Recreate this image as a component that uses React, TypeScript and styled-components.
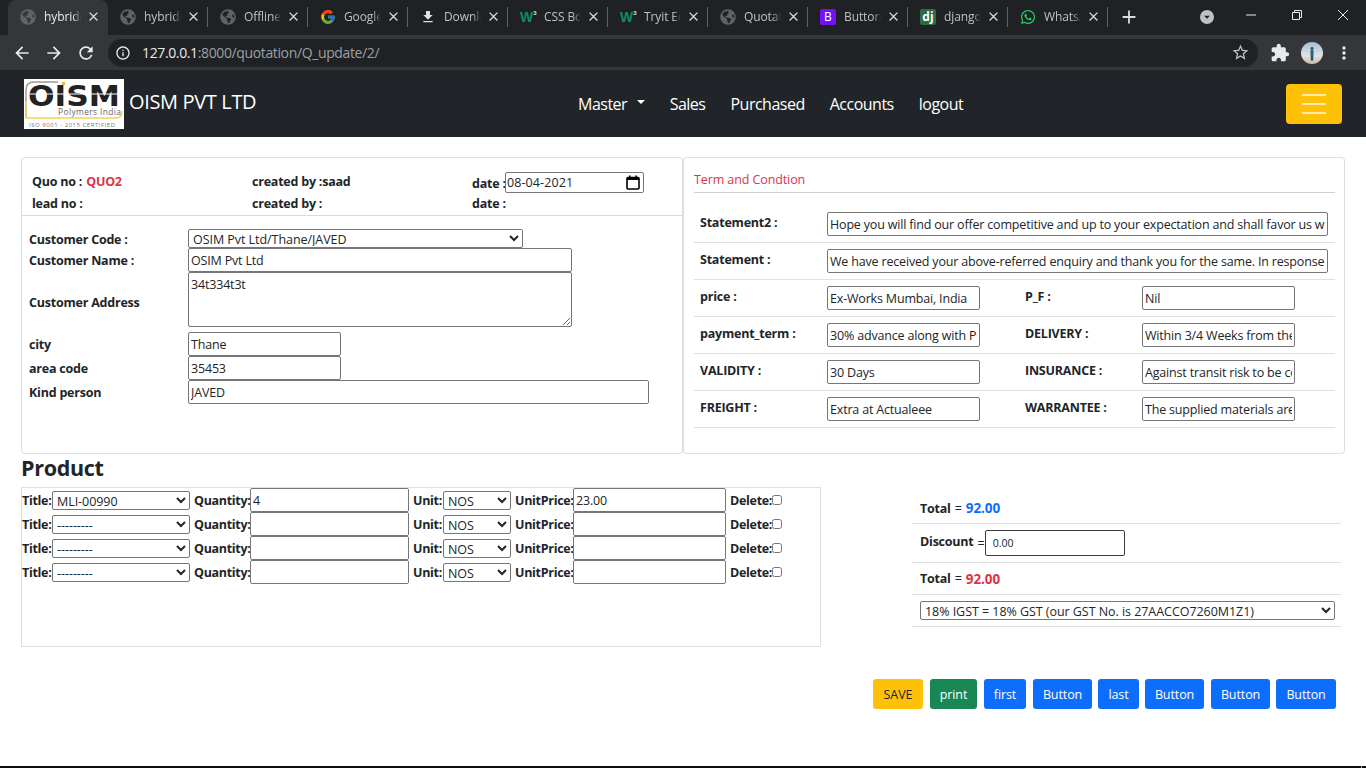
import React from "react";
import styled, { createGlobalStyle } from "styled-components";
import {
  MdArrowBack,
  MdArrowForward,
  MdRefresh,
  MdInfoOutline,
  MdStarBorder,
  MdExtension,
  MdMoreVert,
  MdFileDownload,
  MdClose,
  MdAdd,
  MdArrowDropDown,
} from "react-icons/md";
import { FaGlobeAmericas, FaWhatsapp } from "react-icons/fa";
import { FcGoogle } from "react-icons/fc";

const FONT = `"Open Sans", "Noto Sans", "Liberation Sans", sans-serif`;

const Global = createGlobalStyle`
  html, body { margin: 0; padding: 0; background: #fff; overflow: hidden; }
  body { font-family: ${FONT}; font-size: 13px; color: #212529; }
  * { box-sizing: border-box; }
`;

const Page = styled.div`
  width: 1366px;
  height: 768px;
  display: flex;
  flex-direction: column;
  overflow: hidden;
`;

/* ---------- browser chrome ---------- */
const TabStrip = styled.div`
  height: 35px;
  background: #202124;
  display: flex;
  align-items: stretch;
  padding-left: 8px;
  flex: none;
`;
const Tab = styled.div<{ $active?: boolean; $sep?: boolean }>`
  width: 100px;
  height: 35px;
  flex: none;
  position: relative;
  display: flex;
  align-items: center;
  padding: 0 0 2px 12px;
  gap: 8px;
  background: ${(p) => (p.$active ? "#35363a" : "transparent")};
  border-radius: ${(p) => (p.$active ? "8px 8px 0 0" : "0")};
  color: ${(p) => (p.$active ? "#e8eaed" : "#bdc1c6")};
  &::after {
    content: "";
    display: ${(p) => (p.$sep ? "block" : "none")};
    position: absolute;
    right: 0;
    top: 7px;
    height: 20px;
    width: 1px;
    background: #5f6368;
  }
`;
const Fav = styled.span<{ $color?: string }>`
  width: 16px;
  height: 16px;
  flex: none;
  display: flex;
  align-items: center;
  justify-content: center;
  color: ${(p) => p.$color || "#5f6368"};
  font-size: 16px;
`;
const BadgeFav = styled.span<{ $bg: string; $weight: number }>`
  width: 16px;
  height: 16px;
  flex: none;
  display: flex;
  align-items: center;
  justify-content: center;
  background: ${(p) => p.$bg};
  border-radius: 2px;
  color: #fff;
  font: ${(p) => p.$weight} 12px ${FONT};
`;
const W3 = styled.span`
  width: 16px;
  flex: none;
  color: #0b8f5f;
  font: 800 14px "Liberation Sans", sans-serif;
  letter-spacing: -1px;
  display: flex;
  align-items: flex-start;
  sup { font-size: 6px; line-height: 8px; margin-left: 1px; color: #cfe9de; }
`;
const TabTitle = styled.span`
  width: 37px;
  overflow: hidden;
  white-space: nowrap;
  font-size: 12px;
  letter-spacing: -0.1px;
  -webkit-mask-image: linear-gradient(90deg, #000 78%, transparent 100%);
  mask-image: linear-gradient(90deg, #000 78%, transparent 100%);
`;
const TabClose = styled.span`
  position: absolute;
  left: 78px;
  top: 9px;
  width: 15px;
  height: 15px;
  display: flex;
  align-items: center;
  justify-content: center;
  font-size: 15px;
  color: #dadce0;
`;
const NewTab = styled.span`
  margin-left: 10px;
  width: 24px;
  padding-bottom: 2px;
  display: flex;
  align-items: center;
  justify-content: center;
  color: #dadce0;
  font-size: 22px;
`;
const TabSearch = styled.span`
  margin-left: 60px;
  margin-bottom: 1px;
  align-self: center;
  width: 14px;
  height: 14px;
  border-radius: 50%;
  background: #bdc1c6;
  color: #202124;
  display: flex;
  align-items: center;
  justify-content: center;
  font-size: 16px;
`;
const WinControls = styled.div`
  margin-left: 14px;
  display: flex;
  color: #e8eaed;
  align-items: flex-start;
`;
const WinBtn = styled.span`
  width: 46px;
  height: 30px;
  display: flex;
  align-items: center;
  justify-content: center;
`;

const Toolbar = styled.div`
  height: 35px;
  background: #35363a;
  display: flex;
  align-items: center;
  padding-left: 12px;
  color: #e8eaed;
  flex: none;
`;
const ToolIcon = styled.span<{ $w?: number }>`
  width: ${(p) => p.$w || 32}px;
  display: flex;
  align-items: center;
  justify-content: center;
  font-size: 20px;
  flex: none;
`;
const NavGroup = styled.div`
  display: flex;
  width: 96px;
  flex: none;
`;
const Omnibox = styled.div`
  width: 1150px;
  height: 28px;
  margin-right: 6px;
  background: #202124;
  border-radius: 14px;
  display: flex;
  align-items: center;
  padding-left: 7px;
  font-size: 14px;
  color: #9aa0a6;
  flex: none;
`;
const InfoIcon = styled.span`
  width: 16px;
  display: flex;
  font-size: 16px;
  color: #e8eaed;
  margin-right: 11px;
`;
const Host = styled.span`
  color: #e8eaed;
`;
const UrlText = styled.span`
  flex: 1;
  letter-spacing: -0.37px;
`;
const Star = styled.span`
  font-size: 19px;
  color: #bdc1c6;
  display: flex;
  margin-right: 8px;
`;
const Avatar = styled.span`
  width: 22px;
  height: 22px;
  border-radius: 50%;
  flex: none;
  overflow: hidden;
  background: linear-gradient(180deg, #a9bccb 0%, #dfe3e6 62%, #cbbca6 100%);
  display: flex;
  align-items: center;
  justify-content: center;
  svg { display: block; }
`;

/* ---------- navbar ---------- */
const Navbar = styled.nav`
  height: 67px;
  background: #212529;
  display: flex;
  align-items: center;
  padding: 0 24px;
  flex: none;
`;
const LogoBox = styled.span`
  width: 100px;
  height: 50px;
  background: #fff;
  flex: none;
  display: block;
  svg { display: block; }
`;
const Brand = styled.span`
  margin-left: 5px;
  color: #fff;
  font-size: 20px;
  line-height: 27px;
  position: relative;
  top: -2px;
  letter-spacing: -0.35px;
  width: 128px;
  white-space: nowrap;
`;
const NavLinks = styled.div`
  display: flex;
  margin-left: 321px;
  gap: 25px;
  color: #fff;
  font-size: 16px;
  letter-spacing: -0.5px;
`;
const NavLink = styled.span`
  display: flex;
  align-items: center;
  white-space: nowrap;
`;
const Caret = styled.span`
  display: inline-block;
  margin-left: 9.5px;
  border-top: 4.8px solid #fff;
  border-left: 4.8px solid transparent;
  border-right: 4.8px solid transparent;
  position: relative;
  top: -2px;
`;
const Toggler = styled.span`
  margin-left: auto;
  width: 56px;
  height: 40px;
  background: #ffc107;
  border-radius: 4px;
  display: flex;
  flex-direction: column;
  align-items: center;
  justify-content: center;
  gap: 7px;
`;
const TogglerBar = styled.span`
  width: 24px;
  height: 2px;
  background: #ffeaa6;
`;

/* ---------- main ---------- */
const Main = styled.main`
  flex: 1;
  padding: 20px 21px 0;
  display: flex;
  flex-direction: column;
  min-height: 0;
`;
const Cards = styled.div`
  display: grid;
  grid-template-columns: 662px 662px;
  height: 297px;
  flex: none;
`;
const Card = styled.section`
  border: 1px solid rgba(0, 0, 0, 0.125);
  border-radius: 4px;
  background: #fff;
  min-width: 0;
`;
const CardHead = styled.div`
  height: 58px;
  padding: 14px 0 0 10px;
  border-bottom: 1px solid rgba(0, 0, 0, 0.15);
`;
const HeadRow = styled.div`
  display: grid;
  grid-template-columns: 220px 220px 1fr;
  height: 21px;
  align-items: center;
`;
const Bold = styled.span`
  font-weight: 700;
  font-size: 12.5px;
  letter-spacing: -0.22px;
  white-space: nowrap;
`;
const RaisedBold = styled(Bold)`
  margin-bottom: 3px;
`;
const LoweredBold = styled(Bold)`
  padding-top: 2px;
`;
const Red = styled.span`
  color: #dc3545;
  margin-left: 1px;
`;
const DateWrap = styled.span`
  display: inline-flex;
  align-items: center;
`;
const DateLabel = styled(Bold)`
  width: 33px;
  padding-top: 2px;
`;
const DateBox = styled.span`
  width: 139px;
  height: 21px;
  border: 1px solid #767676;
  border-radius: 2px;
  display: flex;
  align-items: center;
  justify-content: space-between;
  padding: 0 3px 0 1px;
`;
const DateInput = styled.input`
  border: 0;
  outline: 0;
  width: 100px;
  padding: 0;
  font: 12.5px ${FONT};
  color: #212529;
  letter-spacing: 0.1px;
`;
const CustomerForm = styled.div`
  padding: 13px 0 0 7px;
  display: flex;
  flex-direction: column;
`;
const FormRow = styled.div<{ $h: number }>`
  display: grid;
  grid-template-columns: 159px 1fr;
  height: ${(p) => p.$h}px;
  align-items: center;
`;
const BaseInput = styled.input<{ $w?: number }>`
  display: block;
  width: ${(p) => (p.$w ? `${p.$w}px` : "100%")};
  height: 24px;
  border: 1px solid #767676;
  border-radius: 2px;
  background: #fff;
  padding: 1px 2px;
  font: 12.5px ${FONT};
  letter-spacing: -0.18px;
  color: #212529;
  outline: 0;
`;
const BaseSelect = styled.select<{ $w: number; $h?: number }>`
  display: block;
  flex: none;
  width: ${(p) => p.$w}px;
  height: ${(p) => p.$h || 19}px;
  border: 1px solid #767676;
  border-radius: 2px;
  background: #fff;
  font: 12.5px ${FONT};
  letter-spacing: -0.05px;
  color: #212529;
  outline: 0;
  padding: 0 0 1px;
`;
const BaseArea = styled.textarea`
  display: block;
  align-self: start;
  width: 384px;
  height: 55px;
  border: 1px solid #767676;
  border-radius: 2px;
  padding: 3px 2px;
  font: 12.5px ${FONT};
  letter-spacing: -0.18px;
  color: #212529;
  outline: 0;
`;

const TermBody = styled.div`
  padding: 0 9px 0 10px;
`;
const TermTitle = styled.div`
  height: 35px;
  border-bottom: 1px solid rgba(0, 0, 0, 0.18);
  color: #dc3545;
  font-size: 12.5px;
  letter-spacing: -0.1px;
  padding-top: 13px;
  margin-bottom: 13px;
`;
const TermRow = styled.div<{ $wide?: boolean }>`
  height: 37px;
  border-bottom: 1px solid rgba(0, 0, 0, 0.125);
  display: grid;
  grid-template-columns: ${(p) => (p.$wide ? "133px 501px" : "133px 153px 45px 117px 153px")};
  grid-template-rows: 24px;
  padding-top: 6px;
`;
const TermLabel = styled(Bold)<{ $indent?: boolean }>`
  padding-left: ${(p) => (p.$indent ? "6px" : "0")};
  line-height: 21px;
`;
const Spacer = styled.span``;

/* ---------- product ---------- */
const Heading = styled.h3`
  margin: 0;
  height: 33px;
  font-size: 21.5px;
  line-height: 28px;
  font-weight: 700;
  letter-spacing: -0.3px;
`;
const LowerGrid = styled.div`
  display: grid;
  grid-template-columns: 800px 429px;
  column-gap: 91px;
  flex: none;
`;
const ProductBox = styled.div`
  height: 160px;
  border: 1px solid rgba(0, 0, 0, 0.125);
`;
const ProductRow = styled.div`
  height: 24px;
  display: flex;
  align-items: center;
  white-space: nowrap;
`;
const ProdLabel = styled.span<{ $w: number; $ml?: number }>`
  font-weight: 700;
  font-size: 12.5px;
  letter-spacing: -0.3px;
  margin-left: ${(p) => p.$ml ?? 4}px;
  width: ${(p) => p.$w}px;
  flex: none;
`;
const Check = styled.input`
  margin: 0;
  width: 10px;
  height: 10px;
  flex: none;
`;
const Totals = styled.div`
  margin-top: 6px;
`;
const TotalRow = styled.div<{ $h: number }>`
  height: ${(p) => p.$h}px;
  border-bottom: 1px solid rgba(0, 0, 0, 0.125);
  display: flex;
  align-items: center;
  padding-left: 8px;
`;
const Eq = styled.span`
  margin: 0 4px;
  font-size: 12.5px;
`;
const Amount = styled(Bold)<{ $color: string }>`
  color: ${(p) => p.$color};
  font-size: 13.5px;
  letter-spacing: -0.1px;
`;
const DiscountInput = styled.input`
  width: 140px;
  height: 26px;
  border: 1px solid #3b3b3b;
  border-radius: 2px;
  padding: 0 7px;
  font: 10.5px ${FONT};
  color: #212529;
  outline: 0;
  margin-left: -4px;
`;
const Actions = styled.div`
  display: flex;
  justify-content: flex-end;
  padding-right: 9px;
  margin-top: 32px;
  flex: none;
`;
const Btn = styled.button<{ $bg: string; $fg?: string; $w: number; $gap?: number }>`
  width: ${(p) => p.$w}px;
  height: 30px;
  margin-left: ${(p) => p.$gap ?? 7}px;
  padding: 0;
  border: 0;
  border-radius: 3px;
  background: ${(p) => p.$bg};
  color: ${(p) => p.$fg || "#fff"};
  font: 12.5px ${FONT};
  letter-spacing: -0.1px;
`;
const BottomEdge = styled.div`
  height: 2px;
  background: #0d0d0d;
  flex: none;
  position: relative;
  &::after {
    content: "";
    position: absolute;
    left: 1361px;
    top: 0;
    width: 1px;
    height: 2px;
    background: #b5b5b5;
  }
`;

const Globe = () => (
  <Fav>
    <FaGlobeAmericas />
  </Fav>
);

const tabs: { icon: React.ReactNode; title: string }[] = [
  { icon: <Globe />, title: "hybrid(1)" },
  { icon: <Globe />, title: "hybrid(1)" },
  { icon: <Globe />, title: "Offline Page" },
  { icon: <Fav><FcGoogle /></Fav>, title: "Google" },
  { icon: <Fav $color="#dee1e6"><MdFileDownload /></Fav>, title: "Downloads" },
  { icon: <W3>W<sup>3</sup></W3>, title: "CSS Borders" },
  { icon: <W3>W<sup>3</sup></W3>, title: "Tryit Editor" },
  { icon: <Globe />, title: "Quotation" },
  { icon: <BadgeFav $bg="#7410f5" $weight={400}>B</BadgeFav>, title: "Buttons" },
  { icon: <BadgeFav $bg="#2c6b45" $weight={700}>dj</BadgeFav>, title: "django" },
  { icon: <Fav $color="#25d366"><FaWhatsapp /></Fav>, title: "WhatsApp" },
];

const Logo = () => (
  <svg width="100" height="50" viewBox="0 0 100 50">
    <rect width="100" height="50" fill="#fff" />
    <path d="M2 38 V11 Q2 3 10 3 H34" fill="none" stroke="#9a9a9a" strokeWidth="1.5" />
    <path d="M2 22 V39 H92 Q98 39 98 32" fill="none" stroke="#f0d25a" strokeWidth="1.6" />
    <text
      x="4"
      y="27"
      fontFamily="DejaVu Sans, sans-serif"
      fontWeight="700"
      fontSize="29"
      textLength="92"
      lengthAdjust="spacingAndGlyphs"
      fill="#222"
    >
      OISM
    </text>
    <path d="M6 15 H96" stroke="#fff" strokeWidth="1" />
    <rect x="38" y="3" width="3" height="3" fill="#e9b92e" />
    <text x="34" y="36" fontFamily="Open Sans, sans-serif" fontSize="8.4" fill="#666" textLength="63">
      Polymers India
    </text>
    <text x="5" y="47.5" fontFamily="Open Sans, sans-serif" fontSize="6" fill="#777" textLength="86">
      ISO 9001 - 2015 CERTIFIED
    </text>
  </svg>
);

const Calendar = () => (
  <svg width="14" height="15" viewBox="0 0 14 15">
    <rect x="1" y="2.5" width="12" height="11.5" rx="1" fill="none" stroke="#000" strokeWidth="1.6" />
    <rect x="1" y="2" width="12" height="3" fill="#000" />
    <rect x="3" y="0.5" width="1.6" height="2" fill="#000" />
    <rect x="9.4" y="0.5" width="1.6" height="2" fill="#000" />
  </svg>
);

const Person = () => (
  <svg width="22" height="22" viewBox="0 0 22 22">
    <circle cx="11" cy="6.5" r="1.4" fill="#33424f" />
    <rect x="9.4" y="8" width="3.2" height="6" rx="1" fill="#1f6f90" />
    <rect x="9.7" y="13.5" width="2.6" height="5" fill="#3a4c5c" />
  </svg>
);

const MinimizeGlyph = () => (
  <svg width="10" height="10" viewBox="0 0 10 10">
    <path d="M0 5 H10" stroke="#e8eaed" strokeWidth="1" />
  </svg>
);
const RestoreGlyph = () => (
  <svg width="10" height="10" viewBox="0 0 10 10">
    <path d="M.5 2.5 H7.5 V9.5 H.5 Z M2.5 2.5 V.5 H9.5 V7.5 H7.5" fill="none" stroke="#e8eaed" strokeWidth="1" />
  </svg>
);
const CloseGlyph = () => (
  <svg width="10" height="10" viewBox="0 0 10 10">
    <path d="M0 0 L10 10 M10 0 L0 10" stroke="#e8eaed" strokeWidth="1" />
  </svg>
);

const noop = () => {};

const Field = (p: { value: string; w?: number }) => (
  <BaseInput value={p.value} onChange={noop} $w={p.w} />
);

const termPairs = [
  ["price :", "Ex-Works Mumbai, India", "P_F :", "Nil"],
  ["payment_term :", "30% advance along with PO, balance", "DELIVERY :", "Within 3/4 Weeks from the date"],
  ["VALIDITY :", "30 Days", "INSURANCE :", "Against transit risk to be covered"],
  ["FREIGHT :", "Extra at Actualeee", "WARRANTEE :", "The supplied materials are warranted"],
];

const products = [
  { title: "MLI-00990", qty: "4", price: "23.00" },
  { title: "---------", qty: "", price: "" },
  { title: "---------", qty: "", price: "" },
  { title: "---------", qty: "", price: "" },
];

export default function App() {
  return (
    <Page>
      <Global />
      <TabStrip>
        {tabs.map((t, i) => (
          <Tab key={i} $active={i === 0} $sep={i > 0}>
            {t.icon}
            <TabTitle>{t.title}</TabTitle>
            <TabClose>
              <MdClose />
            </TabClose>
          </Tab>
        ))}
        <NewTab>
          <MdAdd />
        </NewTab>
        <TabSearch>
          <MdArrowDropDown />
        </TabSearch>
        <WinControls>
          <WinBtn>
            <MinimizeGlyph />
          </WinBtn>
          <WinBtn>
            <RestoreGlyph />
          </WinBtn>
          <WinBtn>
            <CloseGlyph />
          </WinBtn>
        </WinControls>
      </TabStrip>
      <Toolbar>
        <NavGroup>
          <ToolIcon $w={20}><MdArrowBack /></ToolIcon>
          <ToolIcon $w={44}><MdArrowForward /></ToolIcon>
          <ToolIcon $w={20}><MdRefresh /></ToolIcon>
        </NavGroup>
        <Omnibox>
          <InfoIcon>
            <MdInfoOutline />
          </InfoIcon>
          <UrlText>
            <Host>127.0.0.1</Host>:8000/quotation/Q_update/2/
          </UrlText>
          <Star>
            <MdStarBorder />
          </Star>
        </Omnibox>
        <ToolIcon><MdExtension /></ToolIcon>
        <ToolIcon>
          <Avatar>
            <Person />
          </Avatar>
        </ToolIcon>
        <ToolIcon><MdMoreVert /></ToolIcon>
      </Toolbar>
      <Navbar>
        <LogoBox>
          <Logo />
        </LogoBox>
        <Brand>OISM PVT LTD</Brand>
        <NavLinks>
          <NavLink>
            Master
            <Caret />
          </NavLink>
          <NavLink>Sales</NavLink>
          <NavLink>Purchased</NavLink>
          <NavLink>Accounts</NavLink>
          <NavLink>logout</NavLink>
        </NavLinks>
        <Toggler>
          <TogglerBar />
          <TogglerBar />
          <TogglerBar />
        </Toggler>
      </Navbar>
      <Main>
        <Cards>
          <Card>
            <CardHead>
              <HeadRow>
                <RaisedBold>
                  Quo no : <Red>QUO2</Red>
                </RaisedBold>
                <RaisedBold>created by :saad</RaisedBold>
                <DateWrap>
                  <DateLabel>date :</DateLabel>
                  <DateBox>
                    <DateInput value="08-04-2021" onChange={noop} />
                    <Calendar />
                  </DateBox>
                </DateWrap>
              </HeadRow>
              <HeadRow>
                <Bold>lead no :</Bold>
                <Bold>created by :</Bold>
                <Bold>date :</Bold>
              </HeadRow>
            </CardHead>
            <CustomerForm>
              <FormRow $h={19}>
                <LoweredBold>Customer Code :</LoweredBold>
                <BaseSelect $w={335} value="a" onChange={noop}>
                  <option value="a">OSIM Pvt Ltd/Thane/JAVED</option>
                </BaseSelect>
              </FormRow>
              <FormRow $h={24}>
                <Bold>Customer Name :</Bold>
                <Field value="OSIM Pvt Ltd" w={384} />
              </FormRow>
              <FormRow $h={60}>
                <Bold>Customer Address</Bold>
                <BaseArea value="34t334t3t" onChange={noop} />
              </FormRow>
              <FormRow $h={24}>
                <Bold>city</Bold>
                <Field value="Thane" w={153} />
              </FormRow>
              <FormRow $h={24}>
                <Bold>area code</Bold>
                <Field value="35453" w={153} />
              </FormRow>
              <FormRow $h={24}>
                <Bold>Kind person</Bold>
                <Field value="JAVED" w={461} />
              </FormRow>
            </CustomerForm>
          </Card>
          <Card>
            <TermBody>
              <TermTitle>Term and Condtion</TermTitle>
              <TermRow $wide>
                <TermLabel $indent>Statement2 :</TermLabel>
                <Field value="Hope you will find our offer competitive and up to your expectation and shall favor us with your valued order" />
              </TermRow>
              <TermRow $wide>
                <TermLabel $indent>Statement :</TermLabel>
                <Field value="We have received your above-referred enquiry and thank you for the same. In response to your enquiry" />
              </TermRow>
              {termPairs.map((r) => (
                <TermRow key={r[0]}>
                  <TermLabel $indent>{r[0]}</TermLabel>
                  <Field value={r[1]} />
                  <Spacer />
                  <TermLabel>{r[2]}</TermLabel>
                  <Field value={r[3]} />
                </TermRow>
              ))}
            </TermBody>
          </Card>
        </Cards>
        <Heading>Product</Heading>
        <LowerGrid>
          <ProductBox>
            {products.map((p, i) => (
              <ProductRow key={i}>
                <ProdLabel $ml={0} $w={30}>Title:</ProdLabel>
                <BaseSelect $w={138} value={p.title} onChange={noop}>
                  <option>{p.title}</option>
                </BaseSelect>
                <ProdLabel $w={56}>Quantity:</ProdLabel>
                <Field value={p.qty} w={159} />
                <ProdLabel $w={30}>Unit:</ProdLabel>
                <BaseSelect $w={68} value="NOS" onChange={noop}>
                  <option>NOS</option>
                </BaseSelect>
                <ProdLabel $w={58}>UnitPrice:</ProdLabel>
                <Field value={p.price} w={153} />
                <ProdLabel $w={42}>Delete:</ProdLabel>
                <Check type="checkbox" />
              </ProductRow>
            ))}
          </ProductBox>
          <Totals>
            <TotalRow $h={31}>
              <Bold>Total</Bold>
              <Eq>=</Eq>
              <Amount $color="#0d6efd">92.00</Amount>
            </TotalRow>
            <TotalRow $h={39}>
              <RaisedBold>Discount</RaisedBold>
              <Eq>=</Eq>
              <DiscountInput value="0.00" onChange={noop} />
            </TotalRow>
            <TotalRow $h={32}>
              <Bold>Total</Bold>
              <Eq>=</Eq>
              <Amount $color="#dc3545">92.00</Amount>
            </TotalRow>
            <TotalRow $h={32}>
              <BaseSelect $w={415} value="g" onChange={noop}>
                <option value="g">18% IGST = 18% GST (our GST No. is 27AACCO7260M1Z1)</option>
              </BaseSelect>
            </TotalRow>
          </Totals>
        </LowerGrid>
        <Actions>
          <Btn $bg="#ffc107" $fg="#212529" $w={50}>SAVE</Btn>
          <Btn $bg="#198754" $w={47}>print</Btn>
          <Btn $bg="#0d6efd" $w={42}>first</Btn>
          <Btn $bg="#0d6efd" $w={59}>Button</Btn>
          <Btn $bg="#0d6efd" $w={41} $gap={6}>last</Btn>
          <Btn $bg="#0d6efd" $w={59} $gap={6}>Button</Btn>
          <Btn $bg="#0d6efd" $w={59}>Button</Btn>
          <Btn $bg="#0d6efd" $w={60} $gap={6}>Button</Btn>
        </Actions>
      </Main>
      <BottomEdge />
    </Page>
  );
}
